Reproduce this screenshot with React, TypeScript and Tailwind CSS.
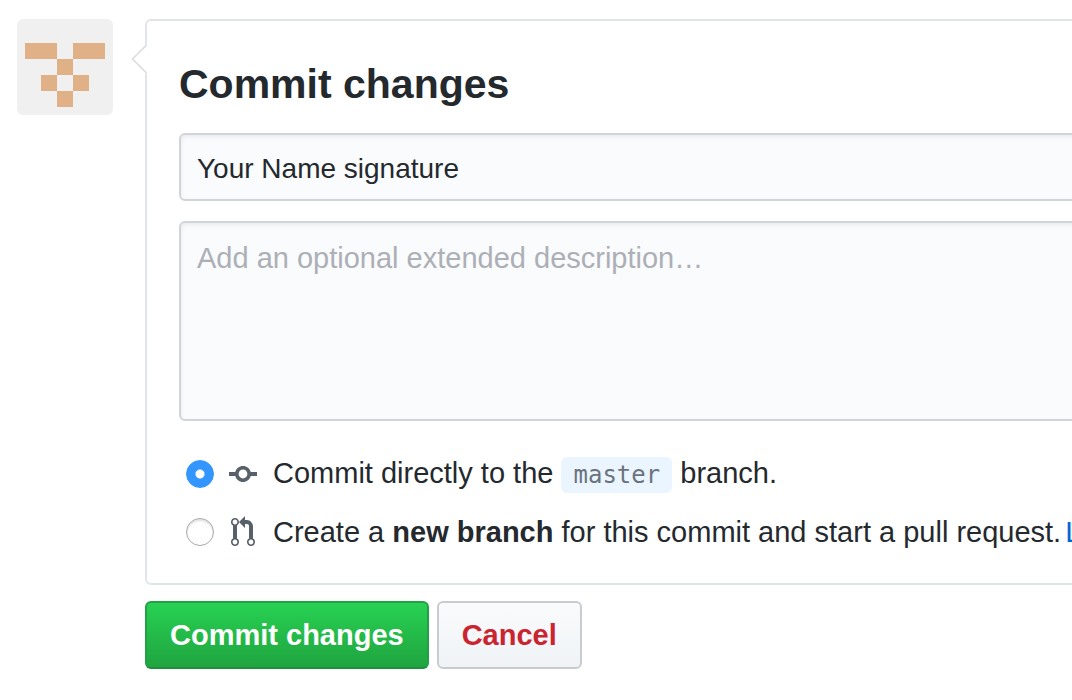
import { useState } from 'react';

function Identicon() {
  return (
    <svg viewBox="0 0 96 96" className="size-24 shrink-0 rounded-md bg-[#f0f0f0]" role="img" aria-label="Avatar">
      <path
        fill="#e0b187"
        shapeRendering="crispEdges"
        d="M8 24h32v16H8zM56 24h32v16H56zM40 40h16v16H40zM24 56h16v16H24zM56 56h16v16H56zM40 72h16v16H40z"
      />
    </svg>
  );
}

function GitCommitIcon() {
  return (
    <svg viewBox="0 0 14 16" className="h-8 w-7 shrink-0" fill="#586069" aria-hidden="true">
      <path
        fillRule="evenodd"
        d="M10.86 7c-.45-1.72-2-3-3.86-3-1.86 0-3.41 1.28-3.86 3H0v2h3.14c.45 1.72 2 3 3.86 3 1.86 0 3.41-1.28 3.86-3H14V7h-3.14zM7 10.2c-1.22 0-2.2-.98-2.2-2.2 0-1.22.98-2.2 2.2-2.2 1.22 0 2.2.98 2.2 2.2 0 1.22-.98 2.2-2.2 2.2z"
      />
    </svg>
  );
}

function PullRequestIcon() {
  return (
    <svg viewBox="0 0 12 16" className="h-8 w-7 shrink-0" fill="#586069" aria-hidden="true">
      <path
        fillRule="evenodd"
        d="M11 11.28V5c-.03-.78-.34-1.47-.94-2.06C9.46 2.35 8.78 2.03 8 2H7V0L4 3l3 3V4h1c.27.02.48.11.69.31.21.2.3.42.31.69v6.28A1.993 1.993 0 0 0 10 15a1.993 1.993 0 0 0 1-3.72zm-1 2.92c-.66 0-1.2-.55-1.2-1.2 0-.65.55-1.2 1.2-1.2.65 0 1.2.55 1.2 1.2 0 .65-.55 1.2-1.2 1.2zM4 3c0-1.11-.89-2-2-2a1.993 1.993 0 0 0-1 3.72v6.56A1.993 1.993 0 0 0 2 15a1.993 1.993 0 0 0 1-3.72V4.72c.59-.34 1-.98 1-1.72zm-.8 10c0 .66-.55 1.2-1.2 1.2-.65 0-1.2-.55-1.2-1.2 0-.65.55-1.2 1.2-1.2.65 0 1.2.55 1.2 1.2zM2 4.2C1.34 4.2.8 3.65.8 3c0-.65.55-1.2 1.2-1.2.65 0 1.2.55 1.2 1.2 0 .65-.55 1.2-1.2 1.2z"
      />
    </svg>
  );
}

const radioClass =
  'size-7 shrink-0 appearance-none rounded-full border border-[#a8a8a8] bg-white shadow-[inset_0_2px_2px_rgba(0,0,0,0.12)] checked:border-[#3396ff] checked:bg-[radial-gradient(circle,white_4px,#3396ff_5px)] checked:shadow-none';

const fieldClass =
  'block w-full rounded-md border-2 border-[#d1d5da] bg-[#fafbfc] px-4 text-[#24292e] shadow-[inset_0_2px_4px_rgba(27,31,35,0.075)] outline-none placeholder:text-[#acb0b6]';

export default function App() {
  const [target, setTarget] = useState('direct');
  const [summary, setSummary] = useState('Your Name signature');

  return (
    <main className="flex min-h-screen gap-8 overflow-hidden bg-white pt-[19px] pl-[17px] font-['Liberation_Sans',Arial,sans-serif] text-[29px] leading-[42px] text-[#24292e]">
      <Identicon />
      <form className="-mr-16 min-w-0 flex-1" onSubmit={(e) => e.preventDefault()}>
        <section className="relative rounded-md border-2 border-[#e1e4e8] px-8 pt-[37px] pb-[22px]">
          <svg viewBox="0 0 16 30" className="absolute top-[23px] -left-4 h-[30px] w-4" aria-hidden="true">
            <path d="M16 0v30L2 15z" fill="#fff" />
            <path d="M15.5 1L1.5 15l14 14" fill="none" stroke="#dcdde0" strokeWidth="1.6" />
          </svg>
          <h1 className="text-[41px] leading-[52px] font-bold">Commit changes</h1>
          <input
            type="text"
            aria-label="Commit summary"
            className={`${fieldClass} mt-[23px] h-[68px] pt-[3px] text-[28px]`}
            value={summary}
            onChange={(e) => setSummary(e.target.value)}
          />
          <textarea
            aria-label="Extended description"
            placeholder="Add an optional extended description…"
            className={`${fieldClass} mt-5 h-[200px] resize-none py-[14px]`}
          />
          <div className="mt-6 flex flex-col whitespace-nowrap">
            <div className="flex h-[58px] items-center pl-[7px]">
              <input
                id="direct"
                type="radio"
                name="target"
                className={radioClass}
                checked={target === 'direct'}
                onChange={() => setTarget('direct')}
              />
              <label htmlFor="direct" className="flex items-center gap-4 pl-[15px]">
                <GitCommitIcon />
                <span>
                  Commit directly to the{' '}
                  <code className="rounded-md bg-[#eaf5ff] px-3 py-1 font-['DejaVu_Sans_Mono',monospace] text-[24px] text-[#6a737d]">
                    master
                  </code>{' '}
                  branch.
                </span>
              </label>
            </div>
            <div className="flex h-[58px] items-center pl-[7px]">
              <input
                id="branch"
                type="radio"
                name="target"
                className={radioClass}
                checked={target === 'branch'}
                onChange={() => setTarget('branch')}
              />
              <label htmlFor="branch" className="flex items-center gap-4 pl-[15px]">
                <PullRequestIcon />
                <span>
                  Create a <strong>new branch</strong> for this commit and start a pull request.
                </span>
              </label>
              <a href="#learn" className="pl-1 text-[#0366d6]">
                Learn more about pull requests.
              </a>
            </div>
          </div>
        </section>
        <div className="mt-4 flex gap-2 font-bold">
          <button
            type="submit"
            className="h-[68px] rounded-md border-2 border-[#24a148] border-b-[#1f8f3d] bg-linear-to-b from-[#28d353] to-[#1fa33f] bg-origin-border px-[23px] text-white"
          >
            Commit changes
          </button>
          <button
            type="button"
            className="h-[68px] rounded-md border-2 border-[#c9cccf] bg-linear-to-b from-[#fafbfc] to-[#eff3f6] bg-origin-border px-[23px] text-[#cb2431]"
          >
            Cancel
          </button>
        </div>
      </form>
    </main>
  );
}
